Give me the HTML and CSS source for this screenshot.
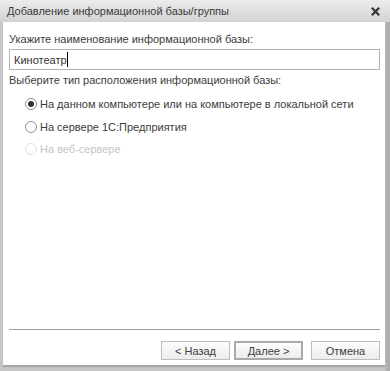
FILE: index.html
```html
<!DOCTYPE html>
<html lang="ru">
  <head>
    <meta charset="UTF-8" />
    <title>Добавление информационной базы/группы</title>
    <link rel="stylesheet" href="styles.css">
  </head>
  <body>
    <main class="window">
      <header class="titlebar">
        <span class="title">Добавление информационной базы/группы</span>
        <button class="close" aria-label="Закрыть">
          <svg width="11" height="11" viewBox="0 0 12 12">
            <path d="M2 2 L10 10 M10 2 L2 10" stroke="#333" stroke-width="2.4" />
          </svg>
        </button>
      </header>

      <section class="panel">
        <label class="label" for="name">Укажите наименование информационной базы:</label>
        <div class="field">
          <input id="name" type="text" value="Кинотеатр" />
          <span class="caret"></span>
        </div>

        <p class="label">Выберите тип расположения информационной базы:</p>
        <div class="options">
          <label class="option"><span class="radio checked"></span>На данном компьютере или на компьютере в локальной сети</label>
          <label class="option"><span class="radio"></span>На сервере 1С:Предприятия</label>
          <label class="option disabled"><span class="radio"></span>На веб-сервере</label>
        </div>

        <div class="spacer"></div>

        <footer class="actions">
          <button class="btn">&lt; Назад</button>
          <button class="btn is-default">Далее &gt;</button>
          <button class="btn is-cancel">Отмена</button>
        </footer>
      </section>
    </main>
  </body>
</html>
```

FILE: styles.css
```css
*,
*::before,
*::after {
  box-sizing: border-box;
  margin: 0;
  padding: 0;
}

html {
  font-family: "Liberation Sans", Arial, sans-serif;
  font-size: 11px;
  color: #3c3c3c;
}

body {
  width: 390px;
  height: 371px;
  overflow: hidden;
  background: #c9c9c9;
}

.window {
  display: flex;
  flex-direction: column;
  height: 100%;
  background: linear-gradient(to right, #c6c6c6 0, #c6c6c6 385px, #b4b4b4 386px, #a9a9a9 390px);
}

.titlebar {
  display: flex;
  align-items: center;
  justify-content: space-between;
  height: 22px;
  padding: 0 9px 0 7px;
  background: linear-gradient(to bottom, #ececec, #d2d2d2);
}

.title {
  font-size: 11px;
  color: #3a3a3a;
}

.close {
  display: flex;
  border: none;
  background: none;
}

.panel {
  display: flex;
  flex-direction: column;
  height: 343px;
  margin: 0 5px 0 3px;
  padding: 9px 5px 5px 6px;
  background: #fff;
  box-shadow: 0 2px 1px #a8a8a8;
}

.label {
  display: block;
  line-height: 16px;
  margin-bottom: 2px;
}

.field {
  position: relative;
  height: 21px;
  border: 1px solid #b4b4b4;
  margin-bottom: 2px;
}

.field input {
  width: 100%;
  height: 100%;
  border: none;
  outline: none;
  padding: 0 4px;
  font: inherit;
  color: #333;
  background: transparent;
}

.caret {
  position: absolute;
  left: 57px;
  top: 2px;
  width: 1px;
  height: 15px;
  background: #000;
}

.options {
  display: flex;
  flex-direction: column;
  padding-left: 16px;
  margin-top: 3px;
}

.option {
  display: flex;
  align-items: center;
  gap: 3px;
  height: 22.5px;

  &.disabled {
    color: #c4c4c4;

    & .radio {
      border-color: #e0e0e0;
    }
  }
}

.radio {
  position: relative;
  width: 12px;
  height: 12px;
  border: 1px solid #8e8e8e;
  border-radius: 50%;
  background: #fff;

  &.checked::after {
    content: "";
    position: absolute;
    inset: 2px;
    border-radius: 50%;
    background: #333;
  }
}

.spacer {
  flex-grow: 1;
}

.actions {
  display: flex;
  justify-content: flex-end;
  gap: 4px;
  border-top: 1px solid #9c9c9c;
  padding-top: 11px;
}

.btn {
  width: 69px;
  height: 19px;
  border: 1px solid #bdbdbd;
  background: linear-gradient(to bottom, #fdfdfd, #ececec);
  font: inherit;
  color: #3c3c3c;

  &.is-default {
    border: 2px solid #a9a9a9;
  }

  &.is-cancel {
    margin-left: 4px;
  }
}
```
